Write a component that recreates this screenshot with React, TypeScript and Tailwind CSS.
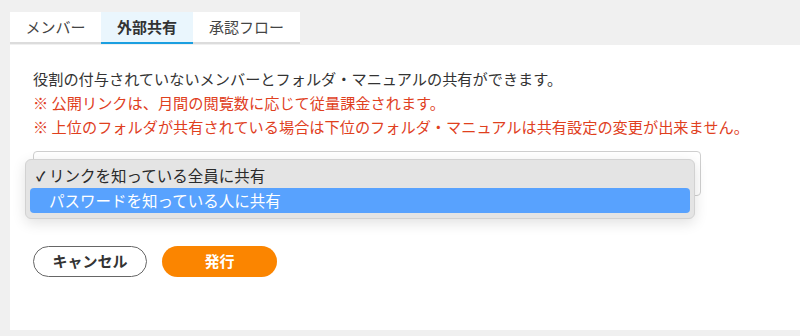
import React from 'react';

const tabs = [
  { label: 'メンバー', width: 'w-[91px]', active: false },
  { label: '外部共有', width: 'w-[92px]', active: true },
  { label: '承認フロー', width: 'w-[107px]', active: false },
];

export default function App() {
  return (
    <div className="h-[336px] w-[800px] overflow-hidden bg-[#f0f0f0] pl-[10px] pt-[12px] font-['Noto_Sans_CJK_JP','Noto_Sans',sans-serif] text-[#333]">
      <div className="flex h-[32px]">
        {tabs.map((tab) => (
          <div
            key={tab.label}
            className={
              tab.active
                ? 'flex w-[92px] items-center justify-center border-b-2 border-[#1b9fe0] bg-[#eaf6fd] text-[15px] font-bold text-[#333]'
                : `flex ${tab.width} items-center justify-center border-b-2 border-[#dcdcdc] bg-white text-[15px] text-[#444]`
            }
          >
            {tab.label}
          </div>
        ))}
      </div>

      <div className="mt-[1px] h-[285px] bg-white pl-[23px] pt-[21px]">
        <div className="text-[15.2px] leading-[24px]">
          <p>役割の付与されていないメンバーとフォルダ・マニュアルの共有ができます。</p>
          <p className="text-[#e0401e]">※ 公開リンクは、月間の閲覧数に応じて従量課金されます。</p>
          <p className="text-[#e0401e]">
            ※ 上位のフォルダが共有されている場合は下位のフォルダ・マニュアルは共有設定の変更が出来ません。
          </p>
        </div>

        <div className="relative mt-[13px] h-[45px] w-[668px] rounded-[4px] border border-[#cfcfcf] bg-white">
          <div className="absolute left-[-9px] top-[7px] w-[670px] rounded-[6px] border border-[#d2d2d2] bg-[#e4e4e4] px-[4px] pb-[5px] pt-[3px] shadow-[0_4px_14px_rgba(0,0,0,0.12)]">
            <div className="flex h-[25px] items-center pl-[6px] text-[15.5px] text-[#2a2a2a]">
              <span className="w-[13px] text-[13px] font-bold">✓</span>
              <span>リンクを知っている全員に共有</span>
            </div>
            <div className="flex h-[25px] items-center rounded-[4px] bg-[#58a2fe] pl-[19px] text-[15.5px] text-white">
              パスワードを知っている人に共有
            </div>
          </div>
        </div>

        <div className="mt-[50px] flex gap-[15px]">
          <button className="flex h-[31px] w-[114px] items-center justify-center rounded-full border border-[#666] bg-white text-[15px] font-bold text-[#333]">
            キャンセル
          </button>
          <button className="flex h-[31px] w-[115px] items-center justify-center rounded-full bg-[#fb8500] text-[15px] font-bold text-white">
            発行
          </button>
        </div>
      </div>
    </div>
  );
}
